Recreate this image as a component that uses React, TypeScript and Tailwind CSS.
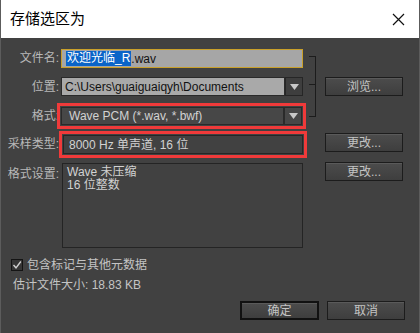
import React from "react";

const font = { fontFamily: '"Liberation Sans", "Noto Sans CJK SC", sans-serif' };

function Btn({ children, def }: { children: React.ReactNode; def?: boolean }) {
  return (
    <div
      className={`flex h-[19px] items-center justify-center bg-gradient-to-b from-[#4c4c4c] to-[#3e3e3e] text-[12px] text-[#c4c4c4] shadow-[inset_0_1px_0_#5a5a5a] ${
        def ? "border-2 border-[#111]" : "border border-[#1c1c1c]"
      }`}
    >
      {children}
    </div>
  );
}

function Tri() {
  return (
    <svg width="9" height="6" viewBox="0 0 9 6">
      <path d="M0 0 L9 0 L4.5 6 Z" fill="#c8c8c8" />
    </svg>
  );
}

function Label({ children, top }: { children: React.ReactNode; top?: boolean }) {
  return (
    <div
      className={`pr-[2px] text-right text-[12px] leading-[19px] text-[#b8b8b8] ${
        top ? "self-start pt-[2px]" : "self-center"
      }`}
    >
      {children}
    </div>
  );
}

export default function App() {
  return (
    <div className="h-[333px] w-[420px] overflow-hidden border-x border-[#5c5c5c] bg-[#414141]" style={font}>
      {/* title bar */}
      <div className="flex h-[38px] items-center justify-between bg-white pl-[9px] pr-[14px]">
        <span className="text-[15px] text-black">存储选区为</span>
        <svg width="13" height="13" viewBox="0 0 13 13">
          <path d="M1 1 L12 12 M12 1 L1 12" stroke="#111" strokeWidth="1.2" />
        </svg>
      </div>

      <div className="pt-[11px]">
        <div className="grid grid-cols-[60px_242px_22px_78px] grid-rows-[19px_20px_20px_19px_85px] gap-y-[9px]">
          {/* row 1 */}
          <Label>文件名:</Label>
          <div className="flex h-[19px] items-center border border-[#c9a02a] bg-[#a6a6a6] pl-[4px] text-[12px]">
            <span className="bg-[#0a64c8] px-[1px] leading-[15px] text-white">欢迎光临_R</span>
            <span className="text-[#111]">.wav</span>
          </div>
          <div className="row-span-3 ml-[6px] mt-[7px] mb-[9px] flex w-[7px] flex-col border-y border-r border-[#1c1c1c]">
            <div className="h-[28px] border-b border-[#1c1c1c]" />
          </div>
          <div />

          {/* row 2 */}
          <Label>位置:</Label>
          <div className="flex h-[19px]">
            <div className="flex flex-1 items-center border border-[#2a2a2a] bg-[#a9a9a9] pl-[3px] text-[12px] text-[#111]">
              C:\Users\guaiguaiqyh\Documents
            </div>
            <div className="flex w-[18px] items-center justify-center border border-[#262626] bg-[#3e3e3e]">
              <Tri />
            </div>
          </div>
          <div className="col-start-4">
            <Btn>浏览...</Btn>
          </div>

          {/* row 3 */}
          <Label>格式:</Label>
          <div className="mt-[1px] flex h-[18px] w-[241px] outline outline-[3px] outline-offset-[1px] outline-[#f03a3a]">
            <div className="flex flex-1 items-center border border-[#2a2a2a] bg-[#474747] pl-[7px] text-[12px] text-[#d2d2d2]">
              Wave PCM (*.wav, *.bwf)
            </div>
            <div className="flex w-[18px] items-center justify-center border border-[#2a2a2a] bg-[#474747]">
              <Tri />
            </div>
          </div>
          <div className="col-start-4" />

          {/* row 4 */}
          <Label>采样类型:</Label>
          <div className="flex h-[19px] w-[240px] items-center justify-self-end border border-[#262626] bg-[#414141] pl-[5px] text-[12px] text-[#d2d2d2] outline outline-[3px] outline-offset-[1px] outline-[#f03a3a]">
            8000 Hz 单声道, 16 位
          </div>
          <div />
          <div className="-mt-[2px]">
            <Btn>更改...</Btn>
          </div>

          {/* row 5 */}
          <Label top>格式设置:</Label>
          <div className="ml-[1px] border border-[#242424] px-[4px] pt-[2px] text-[12px] leading-[13px] text-[#d2d2d2]">
            <div>Wave 未压缩</div>
            <div>16 位整数</div>
          </div>
          <div />
          <div className="-mt-[1px]">
            <Btn>更改...</Btn>
          </div>
        </div>

        {/* checkbox */}
        <div className="mt-[10px] flex h-[13px] items-center gap-[4px] pl-[10px]">
          <div className="flex h-[12px] w-[12px] items-center justify-center border border-[#141414] bg-[#363636]">
            <svg width="10" height="10" viewBox="0 0 10 10">
              <path d="M1.5 5 L4 7.8 L8.8 1.5" stroke="#d0d0d0" strokeWidth="1.4" fill="none" />
            </svg>
          </div>
          <span className="text-[12px] text-[#c4c4c4]">包含标记与其他元数据</span>
        </div>

        <div className="mt-[6px] h-[16px] pl-[12px] text-[12px] leading-[16px] text-[#c4c4c4]">
          估计文件大小: 18.83 KB
        </div>

        <div className="mt-[8px] flex justify-end gap-[8px] pr-[14px]">
          <div className="w-[79px]">
            <Btn def>确定</Btn>
          </div>
          <div className="w-[78px]">
            <Btn>取消</Btn>
          </div>
        </div>
      </div>
    </div>
  );
}
